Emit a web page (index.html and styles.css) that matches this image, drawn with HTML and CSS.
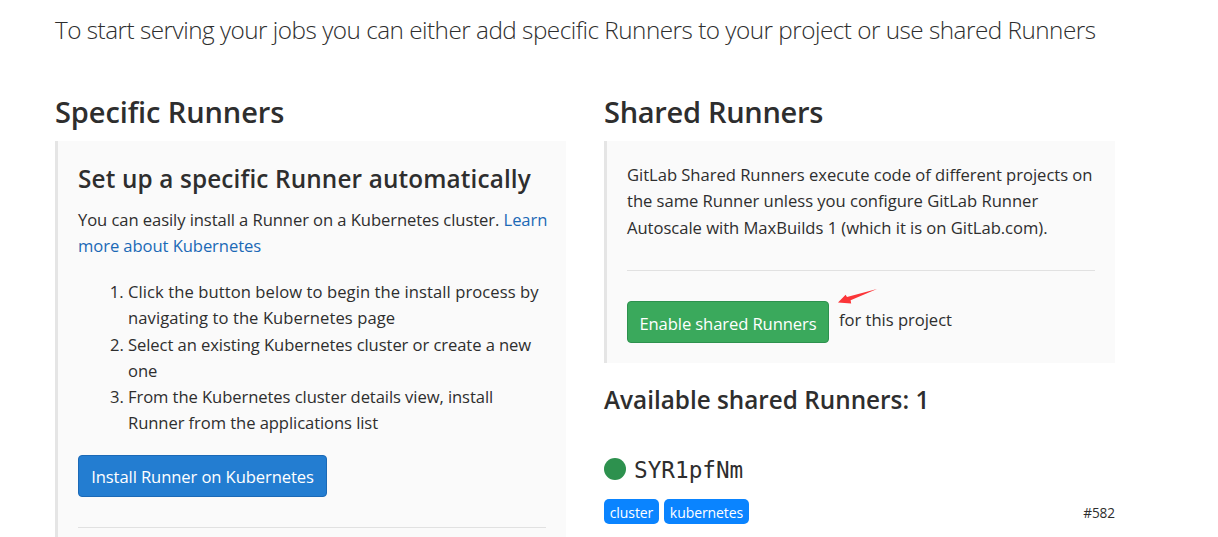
FILE: index.html
```html
<!DOCTYPE html>
<html lang="en">
<head>
<meta charset="utf-8">
<title>Runners</title>
<link rel="stylesheet" href="styles.css">
</head>
<body>
<main class="page">
  <p class="lead">To start serving your jobs you can either add specific Runners to your project or use shared Runners</p>
  <div class="columns">
    <section class="column">
      <h2 class="title title-specific">Specific Runners</h2>
      <div class="well well-specific">
        <h3 class="subtitle">Set up a specific Runner automatically</h3>
        <p class="text">You can easily install a Runner on a Kubernetes cluster. <a class="link" href="#">Learn<br>more about Kubernetes</a></p>
        <ol class="steps">
          <li class="step-install">Click the button below to begin the install process by<br>navigating to the Kubernetes page</li>
          <li>Select an existing Kubernetes cluster or create a new<br>one</li>
          <li>From the Kubernetes cluster details view, install<br>Runner from the applications list</li>
        </ol>
        <button class="btn btn-info">Install Runner on Kubernetes</button>
        <hr class="rule rule-specific">
      </div>
    </section>
    <section class="column">
      <h2 class="title">Shared Runners</h2>
      <div class="well well-shared">
        <p class="text text-shared">GitLab Shared Runners execute code of different projects on<br>the same Runner unless you configure GitLab Runner<br>Autoscale with MaxBuilds 1 (which it is on GitLab.com).</p>
        <hr class="rule">
        <div class="enable">
          <button class="btn btn-success">Enable shared Runners</button>
          <span class="enable-text">for this project
            <svg class="arrow" width="42" height="18" viewBox="0 0 42 18"><path d="M1 14.4 8.6 6.8 10 9.1 40 .9 13.6 12.2 14.2 15.4Z" fill="#fb3538"/></svg>
          </span>
        </div>
      </div>
      <h3 class="available">Available shared Runners: 1</h3>
      <div class="runner"><span class="status"></span><span class="runner-id">SYR1pfNm</span></div>
      <div class="runner-meta">
        <span class="badge badge-cluster">cluster</span>
        <span class="badge badge-kubernetes">kubernetes</span>
        <small class="number">#582</small>
      </div>
    </section>
  </div>
</main>
</body>
</html>
```
FILE: styles.css
```css
* { box-sizing: border-box; }
body {
  margin: 0;
  height: 537px;
  overflow: hidden;
  background: #fff;
  color: #2e2e2e;
  font: 16.6px/26.25px "Open Sans", "Noto Sans", sans-serif;
  letter-spacing: -0.08px;
  white-space: nowrap;
}
h2, h3, p { margin: 0; }
.page { width: 1060px; margin-left: 55px; padding-top: 12px; }
.lead { height: 36px; font-size: 24.3px; line-height: 36px; font-weight: 300; letter-spacing: -0.51px; }
.columns { display: grid; grid-template-columns: 511px 511px; column-gap: 38px; margin-top: 44px; }
.title { height: 49px; font-size: 29px; line-height: 40px; font-weight: 600; letter-spacing: -0.29px; }
.title-specific { letter-spacing: -0.1px; }
.well { background: #fafafa; border-left: 3px solid #e5e5e5; padding: 0 20px; }
.well-specific { height: 410px; padding-top: 21px; }
.subtitle { height: 45px; font-size: 24.3px; line-height: 34px; font-weight: 600; letter-spacing: 0.15px; }
.link { color: #1b69b6; text-decoration: none; }
.steps { margin: 19.5px 0 18px; padding-left: 50px; }
.step-install { letter-spacing: 0.07px; }
.btn {
  height: 42px;
  padding: 4px 0 0;
  border: 1px solid;
  border-radius: 4px;
  color: #fff;
  font: inherit;
  letter-spacing: -0.1px;
  display: block;
}
.btn-info { width: 249px; background: #237dd1; border-color: #1b69b6; }
.btn-success { width: 202px; background: #3aa95c; border-color: #2d914e; }
.rule { border: 0; height: 1px; background: #e1e1e1; margin: 28px 0 30px; }
.rule-specific { margin: 30px 0 0; }
.well-shared { height: 222px; padding-top: 21px; }
.text-shared { height: 79.75px; letter-spacing: -0.03px; }
.enable { display: flex; gap: 10px; }
.enable-text { position: relative; padding-top: 6px; letter-spacing: -0.03px; }
.arrow { position: absolute; left: -2px; top: -13px; }
.available { margin-top: 20px; height: 34px; font-size: 24.3px; line-height: 34px; font-weight: 600; letter-spacing: 0; }
.runner { display: flex; align-items: center; height: 40px; margin-top: 33px; }
.status { width: 22px; height: 22px; border-radius: 50%; background: #2d914e; margin: -2px 8px 0 0; }
.runner-id { font: 22.7px/30px "DejaVu Sans Mono", monospace; letter-spacing: 0; }
.runner-meta { display: flex; align-items: center; margin-top: 9px; height: 25px; font-size: 14px; line-height: 25px; }
.badge { height: 25px; border-radius: 5px; background: #0a84ff; color: #fff; text-align: center; margin-right: 5px; padding-top: 1px; }
.badge-cluster { width: 55px; }
.badge-kubernetes { width: 85px; }
.number { margin-left: auto; font-size: 13.6px; padding-top: 2px; }
```
